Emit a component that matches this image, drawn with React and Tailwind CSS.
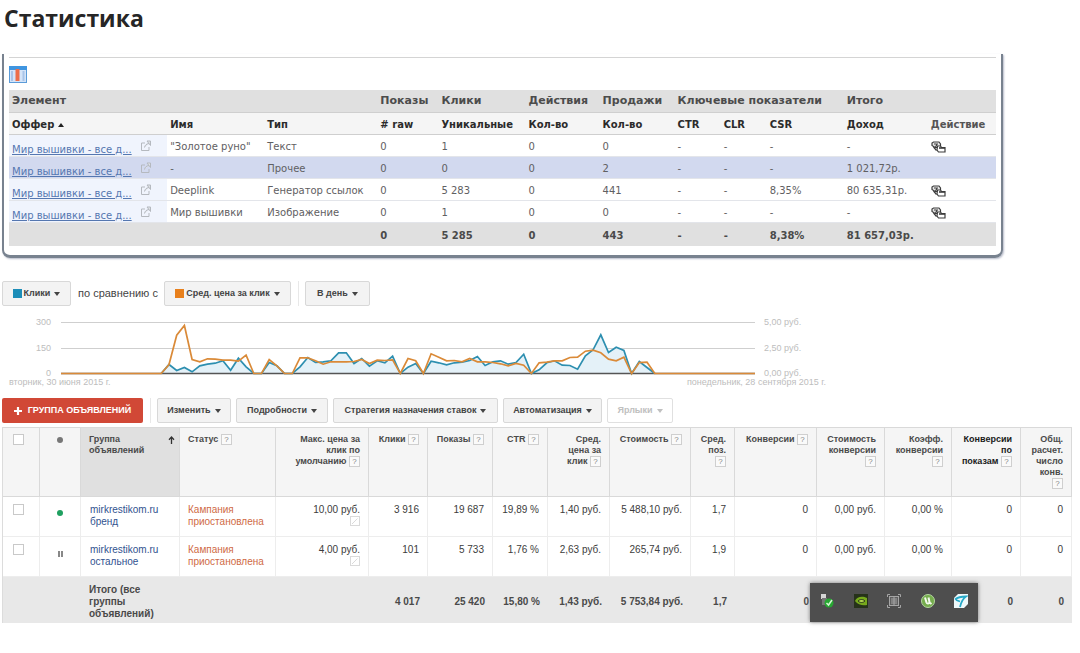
// src/App.jsx

import React from 'react';

const offerRows = [
  { name: '"Золотое руно"', type: 'Текст', values: ['0', '1', '0', '0', '-', '-', '-', '-'], copy: true },
  { name: '-', type: 'Прочее', values: ['0', '0', '0', '2', '-', '-', '-', '1 021,72р.'], selected: true },
  { name: 'Deeplink', type: 'Генератор ссылок', values: ['0', '5 283', '0', '441', '-', '-', '8,35%', '80 635,31р.'], copy: true },
  { name: 'Мир вышивки', type: 'Изображение', values: ['0', '1', '0', '0', '-', '-', '-', '-'], copy: true },
];

const offerTotals = ['0', '5 285', '0', '443', '-', '-', '8,38%', '81 657,03р.'];

// Daily values, 30 June - 28 September
const FIRST_DAY = 13;
const LAST_DAY = 90;

const clicks = [
  0, 54, 18, 36, 10, 46, 56, 62, 76, 20, 92, 40, 0, 0, 66, 46, 0, 0, 40, 96, 66, 70,
  76, 124, 124, 60, 90, 44, 76, 64, 104, 0, 38, 60, 0, 74, 64, 52, 64, 68, 78, 102,
  48, 70, 76, 56, 66, 116, 0, 22, 64, 76, 50, 48, 26, 106, 142, 232, 126, 158, 138,
  0, 72, 36, 0,
];

const prices = [
  0, 54, 230, 288, 84, 70, 88, 86, 80, 80, 74, 110, 0, 0, 84, 46, 0, 0, 94, 94, 76,
  56, 70, 70, 70, 72, 84, 60, 80, 78, 82, 0, 90, 76, 0, 118, 98, 76, 78, 70, 90, 70,
  70, 66, 58, 46, 60, 50, 0, 64, 68, 76, 76, 96, 98, 134, 140, 124, 86, 76, 98, 0,
  66, 68, 0,
];

const columns = [
  { lines: ['Клики'], help: true },
  { lines: ['Показы'], help: true },
  { lines: ['CTR'], help: true },
  { lines: ['Сред.', 'цена за', 'клик'], help: true },
  { lines: ['Стоимость'], help: true },
  { lines: ['Сред.', 'поз.', ''], help: true },
  { lines: ['Конверсии'], help: true },
  { lines: ['Стоимость', 'конверсии', ''], help: true },
  { lines: ['Коэфф.', 'конверсии', ''], help: true },
  { lines: ['Конверсии', 'по', 'показам'], help: true, dark: true },
  { lines: ['Общ.', 'расчет.', 'число', 'конв.', ''], help: true },
];

const groups = [
  {
    name: 'бренд',
    active: true,
    bid: '10,00 руб.',
    values: ['3 916', '19 687', '19,89 %', '1,40 руб.', '5 488,10 руб.', '1,7', '0', '0,00 руб.', '0,00 %', '0', '0'],
  },
  {
    name: 'остальное',
    active: false,
    bid: '4,00 руб.',
    values: ['101', '5 733', '1,76 %', '2,63 руб.', '265,74 руб.', '1,9', '0', '0,00 руб.', '0,00 %', '0', '0'],
  },
];

const groupTotals = ['4 017', '25 420', '15,80 %', '1,43 руб.', '5 753,84 руб.', '1,7', '0', '0,00 руб.', '0,00 %', '0', '0'];

function ExternalIcon() {
  return (
    <svg className="inline-block ml-2 -mt-2" width="12" height="12" viewBox="0 0 12 12" fill="none" stroke="#b5b9bf">
      <path d="M5 3H1.5v7.5H9V7" />
      <path d="M4.500 7.500C5 5 6.500 3.800 9 3.500M7 1h3.500v4.500z" fill="#dfe2e6" />
    </svg>
  );
}

function CopyIcon() {
  return (
    <svg width="15" height="12" viewBox="0 0 15 12" fill="none" stroke="#3d3d3d" strokeWidth="1.200">
      <path d="M2.500 1h5.500l1.500 2v3.500H4L1 4.500V2z" fill="#e8e8e8" />
      <path d="M3 3h2.500M2.500 6l3 3.500M6.500 2.500l-2 3.500" />
      <path d="M6.500 5h3l1 1.500h3.500v4.500H7.500L6 9z" fill="#fff" />
      <path d="M8 7h6" strokeWidth="1.600" />
    </svg>
  );
}

function OfferStats() {
  return (
    <section className="mr-[69px] h-[204px] rounded-b-lg border-x-2 border-b-[3px] border-[#78828f] px-[5px] pt-[3px] shadow-[1px_1px_2px_#b8bccb]">
      <div className="border-t border-[#d4d4d4] pt-2 h-[33px]">
        <button type="button" aria-label="Столбцы" className="block">
          <svg width="18" height="17" viewBox="0 0 18 17">
            <rect x="0.500" y="0.500" width="17" height="16" fill="#d4e4f8" stroke="#5b9bd8" />
            <rect x="0" y="0" width="18" height="4" fill="#3f95e0" />
            <path d="M3 5v10M14.500 5v10" stroke="#a9c4e8" strokeWidth="2" />
            <rect x="6.500" y="3" width="4" height="12" fill="#ed6d48" />
          </svg>
        </button>
      </div>
      <table className="w-full table-fixed text-left font-['DejaVu_Sans',sans-serif] text-[10px] leading-3 text-[#5f6062] whitespace-nowrap [&_td]:p-0 [&_td]:pt-[3px] [&_td]:pl-[3px] [&_th]:p-0 [&_th]:pl-[3px]">
        <colgroup>
          <col className="w-[158px]" />
          <col className="w-[97px]" />
          <col className="w-[113px]" />
          <col className="w-[61px]" />
          <col className="w-[87px]" />
          <col className="w-[74px]" />
          <col className="w-[75px]" />
          <col className="w-[46px]" />
          <col className="w-[46px]" />
          <col className="w-[77px]" />
          <col className="w-[84px]" />
          <col className="w-[68px]" />
        </colgroup>
        <thead>
          <tr className="h-[22px] bg-[#e0e0e0] text-[11px] text-[#4c4c4c]">
            <th colSpan={3}>Элемент</th>
            <th>Показы</th>
            <th>Клики</th>
            <th>Действия</th>
            <th>Продажи</th>
            <th colSpan={3}>Ключевые показатели</th>
            <th colSpan={2}>Итого</th>
          </tr>
          <tr className="h-[22px] bg-[#f5f5f5] border-y border-[#cfcfcf] text-[#2b2b2b] [&>th]:pt-[3px]">
            <th>
              Оффер
              <svg className="inline-block ml-1" width="6" height="4" viewBox="0 0 6 4">
                <path d="M0 4l3-4 3 4z" fill="#222" />
              </svg>
            </th>
            <th>Имя</th>
            <th>Тип</th>
            <th># raw</th>
            <th>Уникальные</th>
            <th>Кол-во</th>
            <th>Кол-во</th>
            <th>CTR</th>
            <th>CLR</th>
            <th>CSR</th>
            <th>Доход</th>
            <th className="text-[#555]">Действие</th>
          </tr>
        </thead>
        <tbody>
          {offerRows.map((row) => (
            <tr
              key={row.name}
              className={'h-[22px] border-b border-[#e3e5ea] ' + (row.selected ? 'bg-[#d2d9ef]' : 'bg-white')}
            >
              <td className={'align-bottom ' + (row.selected ? '' : 'bg-[#f0f4fd]')}>
                <a href="#offer" className="text-[#5577b0] underline">
                  Мир вышивки - все д...
                </a>
                <ExternalIcon />
              </td>
              <td>{row.name}</td>
              <td>{row.type}</td>
              {row.values.map((value, i) => (
                <td key={i}>{value}</td>
              ))}
              <td>
                {row.copy && (
                  <button type="button" aria-label="Копировать" className="block">
                    <CopyIcon />
                  </button>
                )}
              </td>
            </tr>
          ))}
        </tbody>
        <tfoot>
          <tr className="h-6 bg-[#e0e0e0] font-bold text-[#4a4a4a]">
            <td colSpan={3}></td>
            {offerTotals.map((value, i) => (
              <td key={i}>{value}</td>
            ))}
            <td></td>
          </tr>
        </tfoot>
      </table>
    </section>
  );
}

function Caret() {
  return (
    <svg className="ml-1" width="6" height="4" viewBox="0 0 6 4">
      <path d="M0 0h6L3 4z" fill="currentColor" />
    </svg>
  );
}

function MenuButton({ children, color, disabled, className }) {
  return (
    <button
      type="button"
      disabled={disabled}
      className={
        'flex h-[25px] items-center justify-center rounded-xs border text-[9px] font-bold whitespace-nowrap ' +
        (disabled ? 'border-[#e0e0e0] bg-white text-[#c0c0c0] ' : 'border-[#d8d8d8] bg-[#f3f3f3] text-[#444] ') +
        className
      }
    >
      {color && <span className={'mr-[2px] size-[9px] ' + color}></span>}
      {children}
      <Caret />
    </button>
  );
}

function Divider() {
  return <div className="mr-[6px] ml-[7px] h-[25px] w-px bg-[#e8e8e8]"></div>;
}

function Chart() {
  const x = (day) => (day * 694) / LAST_DAY;
  const y = (value) => 56.5 - value / 6;
  const line = (series) => series.map((v, i) => `${x(FIRST_DAY + i).toFixed(1)},${y(v).toFixed(1)}`).join(' ');
  const start = `0,${y(0)} `;
  const end = ` 694,${y(0)}`;

  return (
    <div className="mt-[11px] w-full max-w-[824px] text-[9px] leading-[10px] text-[#bdbdbd]">
      <div className="flex h-[61px]">
        <div className="flex w-[49px] flex-col justify-between text-right">
          <span>300</span>
          <span>150</span>
          <span>0</span>
        </div>
        <svg
          className="ml-[10px] h-full min-w-0 flex-1"
          viewBox="0 0 694 61"
          preserveAspectRatio="none"
          role="img"
          aria-label="Клики, Сред. цена за клик"
        >
          <path d="M0 5.500H694M0 31.500H694" stroke="#cfcfcf" />
          <polygon points={start + line(clicks) + end} fill="#e4f1f8" />
          <path d="M0 56.500H694" stroke="#555" strokeWidth="1.500" />
          <polyline points={line(clicks)} fill="none" stroke="#2d8fb0" strokeWidth="1.700" />
          <polyline points={start + line(prices) + end} fill="none" stroke="#da8a38" strokeWidth="1.700" />
        </svg>
        <div className="ml-[9px] flex w-[62px] flex-col justify-between">
          <span>5,00 руб.</span>
          <span>2,50 руб.</span>
          <span>0,00 руб.</span>
        </div>
      </div>
      <div className="-mt-px flex justify-between pl-[7px]">
        <span>вторник, 30 июня 2015 г.</span>
        <span>понедельник, 28 сентября 2015 г.</span>
      </div>
    </div>
  );
}

function Help() {
  return (
    <button
      type="button"
      aria-label="Справка"
      className="inline-block h-[11px] w-[11px] border border-[#cfcfcf] bg-[#fafafa] text-center align-top text-[8px] leading-[9px] font-normal text-[#888]"
    >
      ?
    </button>
  );
}

function HeaderLabel({ lines, help }) {
  return lines.map((text, i) => (
    <div key={i}>
      {text} {help && i === lines.length - 1 && <Help />}
    </div>
  ));
}

function Checkbox({ label }) {
  return (
    <input
      type="checkbox"
      aria-label={label}
      className="block size-[11px] appearance-none border border-[#c9c9c9] bg-white"
    />
  );
}

function GroupsTable() {
  return (
    <table className="w-full table-fixed border-separate border-spacing-0 border-l border-[#dcdcdc] text-right text-[10px] leading-3 whitespace-nowrap text-[#3c3c3c] [&_td]:px-2 [&_th]:px-2">
      <colgroup>
        <col className="w-[37px]" />
        <col className="w-[41px]" />
        <col className="w-[99px]" />
        <col className="w-[96px]" />
        <col className="w-[93px]" />
        <col className="w-[59px]" />
        <col className="w-[65px]" />
        <col className="w-[55px]" />
        <col className="w-[62px]" />
        <col className="w-[81px]" />
        <col className="w-[44px]" />
        <col className="w-[82px]" />
        <col className="w-[68px]" />
        <col className="w-[67px]" />
        <col className="w-[69px]" />
        <col className="w-[51px]" />
      </colgroup>
      <thead>
        <tr className="h-[70px] bg-[#f5f5f5] align-top text-[9px] leading-[11px] text-[#4a4a4a] [&>th]:border-y [&>th]:border-r [&>th]:border-[#d9d9d9] [&>th]:pt-[6px]">
          <th>
            <div className="pl-[2px]">
              <Checkbox label="Выбрать все" />
            </div>
          </th>
          <th>
            <div className="mx-auto mt-[3px] size-[6px] rounded-full bg-[#777]"></div>
          </th>
          <th className="bg-[#e0e0e0] text-left">
            <div className="flex justify-between">
              <div>
                Группа
                <br />
                объявлений
              </div>
              <svg className="-mr-1 mt-[2px]" width="7" height="8" viewBox="0 0 7 8" fill="none" stroke="#333" strokeWidth="1.300">
                <path d="M3.500 8V1M1 3.700L3.500 1 6 3.700" />
              </svg>
            </div>
          </th>
          <th className="text-left">
            <HeaderLabel lines={['Статус']} help />
          </th>
          <th>
            <HeaderLabel lines={['Макс. цена за', 'клик по', 'умолчанию']} help />
          </th>
          {columns.map((column, i) => (
            <th key={i} className={column.dark ? 'text-[#1a1a1a]' : ''}>
              <HeaderLabel lines={column.lines} help={column.help} />
            </th>
          ))}
        </tr>
      </thead>
      <tbody>
        {groups.map((group) => (
          <tr
            key={group.name}
            className="h-10 align-top [&>td]:border-r [&>td]:border-b [&>td]:border-[#ededed] [&>td]:pt-[7px]"
          >
            <td>
              <div className="pl-[2px]">
                <Checkbox label={'mirkrestikom.ru ' + group.name} />
              </div>
            </td>
            <td>
              {group.active ? (
                <div className="mx-auto mt-[6px] size-[6px] rounded-full bg-[#1fa060]"></div>
              ) : (
                <div className="mx-auto mt-[7px] h-[6px] w-[5px] border-x-2 border-[#888]"></div>
              )}
            </td>
            <td className="text-left">
              <a href="#group" className="block pl-px text-[#31528f]">
                mirkrestikom.ru
                <br />
                {group.name}
              </a>
            </td>
            <td className="text-left text-[#cf6a45]">
              Кампания
              <br />
              приостановлена
            </td>
            <td>
              {group.bid}
              <button type="button" aria-label="Изменить ставку" className="ml-auto block">
                <svg width="10" height="10" viewBox="0 0 10 10" fill="none" stroke="#dadada">
                  <rect x="0.500" y="0.500" width="9" height="9" />
                  <path d="M2 8l5.500-5.500" />
                </svg>
              </button>
            </td>
            {group.values.map((value, i) => (
              <td key={i}>{value}</td>
            ))}
          </tr>
        ))}
      </tbody>
      <tfoot>
        <tr className="h-[46px] bg-[#e8e8e8] text-[#4a4a4a] [&>td]:pt-[3px]">
          <td colSpan={2}></td>
          <td className="text-left font-bold">
            Итого (все
            <br />
            группы
            <br />
            объявлений)
          </td>
          <td></td>
          <td></td>
          {groupTotals.map((value, i) => (
            <td key={i} className="font-bold">
              {value}
            </td>
          ))}
        </tr>
      </tfoot>
    </table>
  );
}

function Tray() {
  return (
    <div className="absolute right-[94px] bottom-px flex h-[39px] w-[168px] items-center justify-between bg-[#4e4e4e] px-[10px] pb-1 shadow-[0_0_4px_#777]">
      <svg width="14" height="14" viewBox="0 0 14 14">
        <rect x="1" y="0" width="5" height="5" fill="#d5d5d5" />
        <rect x="2" y="4" width="5" height="7" fill="#777" />
        <circle cx="9" cy="9" r="4.500" fill="#27a832" />
        <path d="M6.500 9l2 2 3.500-5" fill="none" stroke="#d6f5d4" strokeWidth="1.500" />
      </svg>
      <svg width="14" height="14" viewBox="0 0 14 14">
        <rect width="14" height="14" fill="#26321a" />
        <path d="M1 7c2-5 8-5 12-3v7c-4 1-9 0-12-4z" fill="#76a91c" />
        <path d="M4 7c2-2 5-2 7 0-2 2-5 2-7 0z" fill="#b4d650" stroke="#26321a" />
      </svg>
      <svg width="14" height="14" viewBox="0 0 14 14" fill="none" stroke="#a5a5a5">
        <rect x="2.500" y="2.500" width="9" height="9" fill="#606060" />
        <path d="M0.500 3V0.500H3M11 0.500h2.500V3M13.500 11v2.500H11M3 13.500H0.500V11M4 5h6M4 7h6M4 9h6M7 3v8" />
      </svg>
      <svg width="14" height="14" viewBox="0 0 14 14">
        <circle cx="7" cy="7" r="6.500" fill="#75ad4d" stroke="#b4d5a0" />
        <path d="M4 3.500l1.500 5c.5 1.500 3 1.500 3-.5L7.500 3.500M8.500 8.500l2 1.500" fill="none" stroke="#f3faee" strokeWidth="2" />
      </svg>
      <svg width="14" height="14" viewBox="0 0 14 14">
        <path d="M4 0h10v10l-4 4H0V4z" fill="#eef9fb" />
        <path d="M1 5.500C4 3 8 2.500 12 2.500 8 5 7 9 6 13M2 6l4 1.500" fill="none" stroke="#27a9c8" strokeWidth="1.800" />
      </svg>
    </div>
  );
}

export default function App() {
  return (
    <main className="min-h-screen bg-white pl-[2px] pr-2 font-['Liberation_Sans',Arial,sans-serif]">
      <h1 className="h-[54px] pl-[2px] pt-1 font-['Open_Sans',sans-serif] text-[23px] leading-7 font-bold text-[#262626]">
        Статистика
      </h1>

      <OfferStats />

      <div className="mt-[23px] flex items-center">
        <MenuButton color="bg-[#1c8db8]" className="w-[69px]">
          Клики
        </MenuButton>
        <span className="pr-[6px] pl-[7px] text-[11px] text-[#444]">по сравнению с</span>
        <MenuButton color="bg-[#e8801c]" className="w-[127px]">
          Сред. цена за клик
        </MenuButton>
        <Divider />
        <MenuButton className="w-[65px]">В день</MenuButton>
      </div>

      <Chart />

      <div className="mt-[11px] flex items-center">
        <button
          type="button"
          className="flex h-[25px] w-[141px] items-center justify-center gap-[6px] rounded-xs bg-[#d14836] text-[9px] font-bold whitespace-nowrap text-white"
        >
          <svg width="8" height="8" viewBox="0 0 8 8" stroke="#fff" strokeWidth="2.200">
            <path d="M4 0v8M0 4h8" />
          </svg>
          ГРУППА ОБЪЯВЛЕНИЙ
        </button>
        <Divider />
        <div className="flex gap-[5px]">
          <MenuButton className="w-[74px]">Изменить</MenuButton>
          <MenuButton className="w-[92px]">Подробности</MenuButton>
          <MenuButton className="w-[165px]">Стратегия назначения ставок</MenuButton>
          <MenuButton className="w-[99px]">Автоматизация</MenuButton>
          <MenuButton className="w-[66px]" disabled>
            Ярлыки
          </MenuButton>
        </div>
      </div>

      <div className="relative mt-1">
        <GroupsTable />
        <Tray />
      </div>
    </main>
  );
}
